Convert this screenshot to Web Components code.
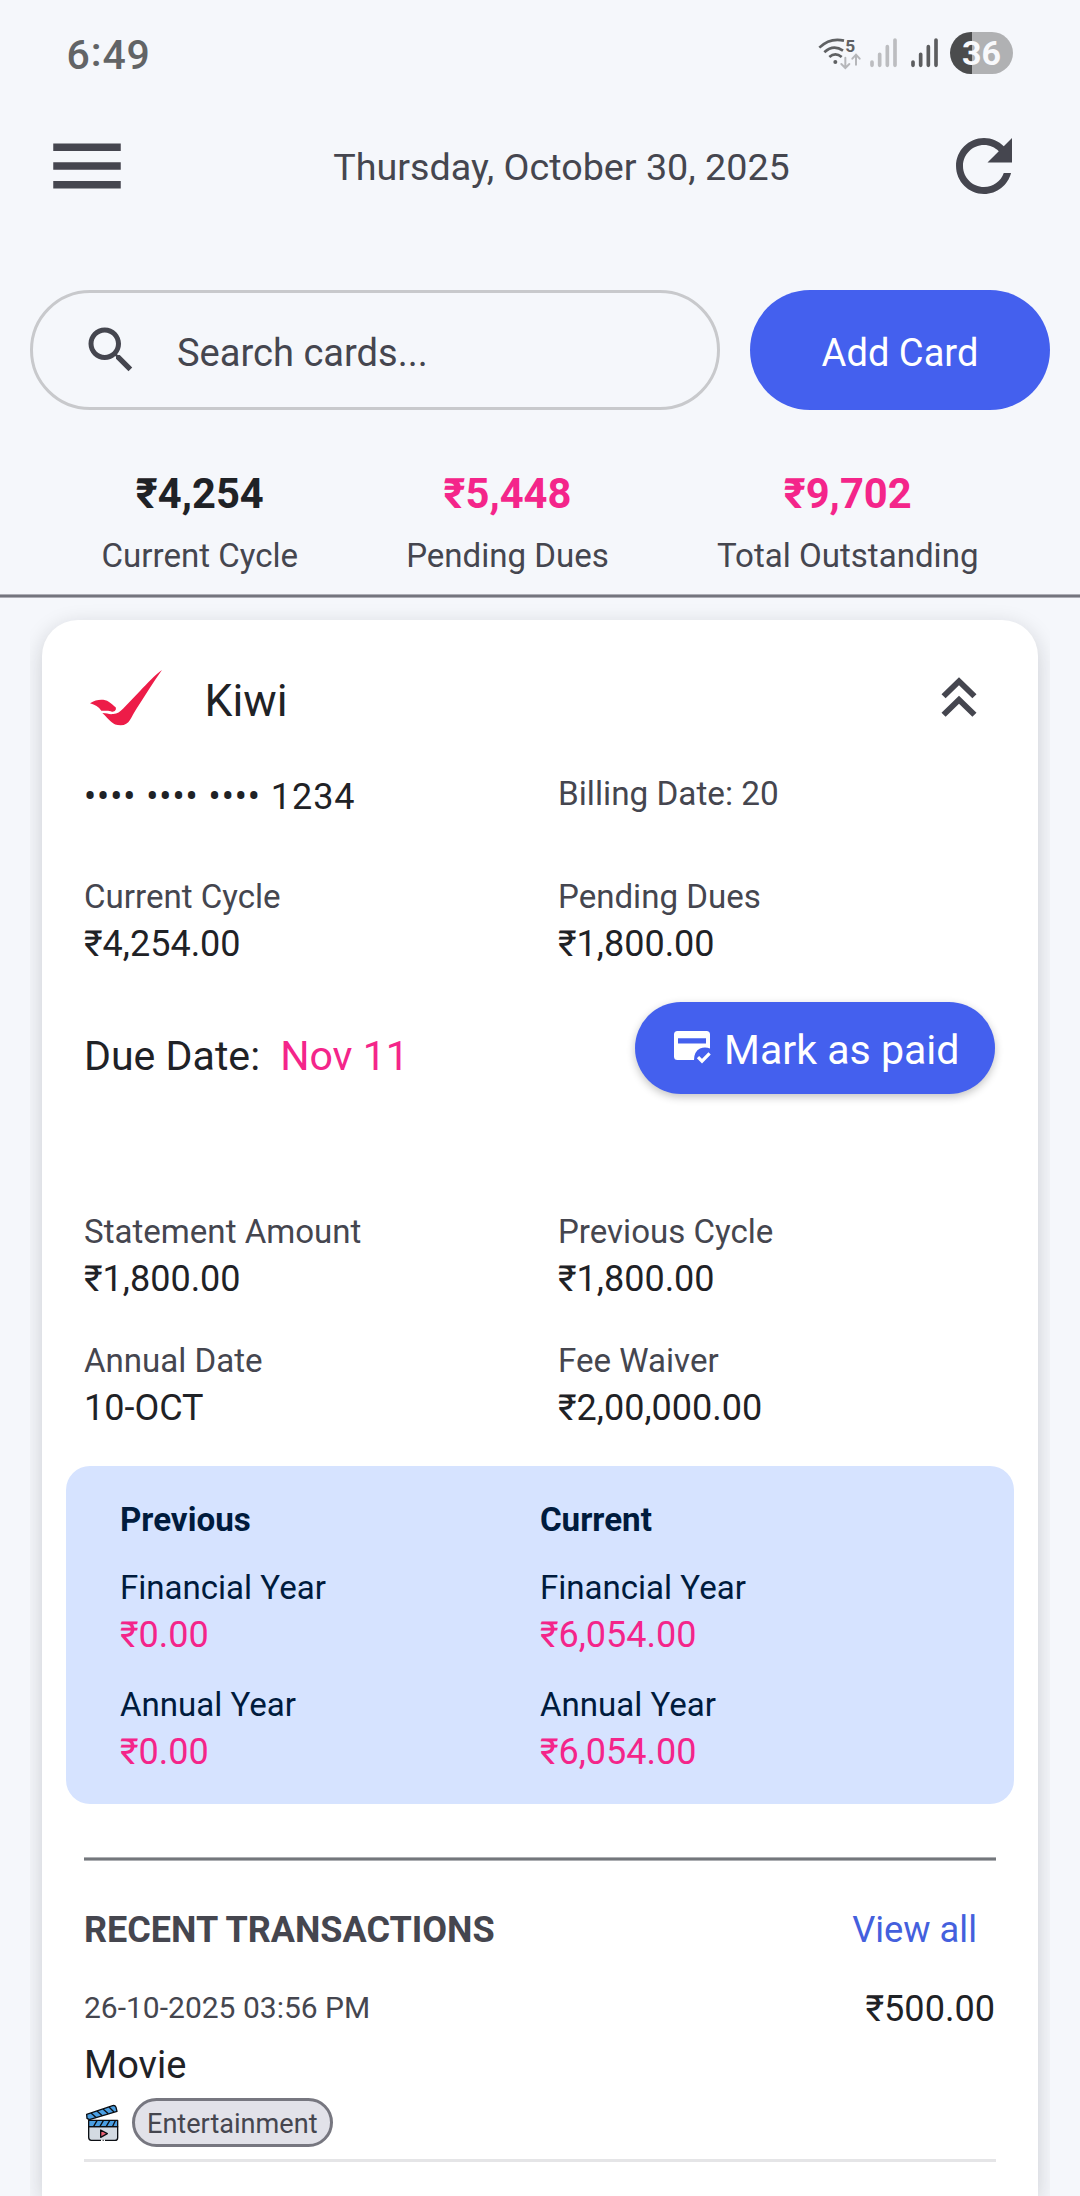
<!DOCTYPE html>
<html lang="en">
<head>
<meta charset="utf-8">
<title>Cards</title>
<style>
  html, body { margin: 0; height: 100%; }
  body { background: #f5f7fb; font-family: Roboto, "Noto Sans", sans-serif; color: #1f2226; overflow: hidden; height: 2196px; }
</style>
</head>
<body>
<cards-app></cards-app>

<script>
const define = (name, html) => {
  const tpl = document.createElement('template');
  tpl.innerHTML = html;
  customElements.define(name, class extends HTMLElement {
    constructor() {
      super();
      this.attachShadow({ mode: 'open' }).append(tpl.content.cloneNode(true));
    }
  });
};

/* Status bar: clock, wifi, two signal meters, battery */
define('status-bar', `
<style>
  :host { display: flex; align-items: center; justify-content: space-between; height: 106px; padding: 0 67px 0 66.5px; box-sizing: border-box; }
  .clock { font-size: 41px; font-weight: 500; line-height: 44px; letter-spacing: .9px; color: #626466; margin-top: 3px; }
  .clock span { vertical-align: 3px; line-height: 1px; }
  .right { display: flex; align-items: center; gap: 6px; }
  svg { display: block; }
  .battery { width: 63px; height: 42px; border-radius: 21px; display: flex; align-items: center; justify-content: center;
    background: linear-gradient(90deg, #4b4c4d 0 22px, #b0b1b3 22px); color: #f8f9fc; font-size: 34px; font-weight: 700; line-height: 42px; }
</style>
<div class="clock">6<span>:</span>49</div>
<div class="right">
  <svg width="134" height="42" viewBox="90 66 402 126" fill="none" stroke-linecap="round">
    <g stroke="#5f6163" stroke-width="8" stroke-linecap="butt">
      <path d="M118 113Q150 82 192 92"/>
      <path d="M133 127Q160 102 189 122"/>
      <path d="M148 141Q166 125 185 141"/>
    </g>
    <circle cx="166" cy="156" r="6" fill="#5f6163"/>
    <text x="196" y="125" font-family="Roboto" font-weight="700" font-size="52" fill="#5f6163">5</text>
    <g stroke="#b6b7ba" stroke-width="6">
      <path d="M196 143V172M184 162L196 174L208 162"/>
      <path d="M228 164V136M217 146L228 134L239 146"/>
    </g>
    <g stroke="#bcbdc0" stroke-width="11">
      <path d="M276 156V166M299 133V166M322 110V166M345 90V166"/>
    </g>
    <g stroke="#5c5d5f" stroke-width="11">
      <path d="M399 156V166M422 133V166M445 110V166M468 90V166"/>
    </g>
  </svg>
  <div class="battery">36</div>
</div>`);

/* Top bar: menu, date, refresh */
define('top-bar', `
<style>
  :host { display: flex; align-items: center; height: 120px; padding: 0 54px 0 42px; box-sizing: border-box; color: #45464f; }
  svg { display: block; fill: currentColor; flex: none; }
  .date { flex: 1; text-align: center; padding: 2px 0 0 49px; font-size: 37.7px; line-height: 44px; }
</style>
<svg width="90" height="90" viewBox="0 0 24 24"><path d="M3 18h18v-2H3v2zm0-5h18v-2H3v2zm0-7v2h18V6H3z"/></svg>
<div class="date"><slot></slot></div>
<svg width="84" height="84" viewBox="0 0 24 24"><path d="M17.65 6.35C16.2 4.9 14.21 4 12 4c-4.42 0-7.99 3.58-7.99 8s3.57 8 7.99 8c3.73 0 6.84-2.55 7.73-6h-2.08c-.82 2.33-3.04 4-5.65 4-3.31 0-6-2.69-6-6s2.69-6 6-6c1.66 0 3.14.69 4.22 1.78L13 11h7V4l-2.35 2.35z"/></svg>`);

define('search-field', `
<style>
  :host { display: flex; align-items: center; flex: 1; height: 120px; box-sizing: border-box; border: 3px solid #c8c9cc; border-radius: 60px; padding-left: 48px; gap: 36px; color: #45464f; font-size: 38.1px; }
  svg { display: block; fill: currentColor; }
  span { line-height: 44px; margin-top: 5px; }
</style>
<svg width="60" height="60" viewBox="0 0 24 24"><path d="M15.5 14h-.79l-.28-.27C15.41 12.59 16 11.11 16 9.5 16 5.91 13.09 3 9.5 3S3 5.91 3 9.5 5.91 16 9.5 16c1.61 0 3.09-.59 4.23-1.57l.27.28v.79l5 4.99L20.49 19l-4.99-5zm-6 0C7.01 14 5 11.99 5 9.5S7.01 5 9.5 5 14 7.01 14 9.5 11.99 14 9.5 14z"/></svg>
<span><slot></slot></span>`);

define('add-button', `
<style>
  :host { display: flex; align-items: center; justify-content: center; width: 300px; height: 120px; border-radius: 60px; background: #4460ee; color: #fff; font-size: 38.1px; }
  span { line-height: 44px; margin-top: 5px; }
</style>
<span><slot></slot></span>`);

define('total-item', `
<style>
  :host { display: flex; flex-direction: column; align-items: center; }
  .v { font-size: 41.7px; font-weight: 700; line-height: 48px; color: var(--value, #1f2226); }
  .l { font-size: 33.1px; line-height: 40px; margin-top: 18px; color: #45464f; }
</style>
<div class="v"><slot name="value"></slot></div>
<div class="l"><slot></slot></div>`);

/* Label above an amount */
define('info-pair', `
<style>
  :host { display: block; padding-top: var(--drop, 1px); margin-bottom: calc(-1 * var(--drop, 1px)); }
  .l { font-size: 33.1px; line-height: 40px; color: var(--label, #45464f); }
  .v { font-size: 36px; line-height: 44px; margin-top: 5px; color: var(--value, #1f2226); }
</style>
<div class="l"><slot></slot></div>
<div class="v"><slot name="value"></slot></div>`);

define('pay-button', `
<style>
  :host { display: flex; align-items: center; width: 360px; height: 92px; box-sizing: border-box; padding-left: 39px; gap: 13px; border-radius: 46px;
    background: #4460ee; color: #fff; font-size: 41.1px; box-shadow: 0 3px 8px rgba(0,0,0,.24); }
  span { line-height: 48px; margin-top: 5px; white-space: nowrap; }
  svg { display: block; flex: none; }
</style>
<svg width="37" height="33" viewBox="0 0 37 33">
  <path fill="#fff" fill-rule="evenodd" d="M3.5 0H32.5Q36 0 36 3.500V17.500Q31 15.500 26 17.500Q20 20.500 20 29H3.500Q0 29 0 25.500V3.500Q0 0 3.500 0ZM4 7.300V12.500H32V7.300Z"/>
  <path d="M24 26.200L28 30.200L35.600 22.400" fill="none" stroke="#fff" stroke-width="3.200"/>
</svg>
<span><slot></slot></span>`);

define('year-panel', `
<style>
  :host { display: grid; grid-template-columns: 420px 1fr; row-gap: 28.3px; margin: 0 -18px; height: 338px; box-sizing: border-box; padding: 33.3px 0 0 53.9px;
    border-radius: 24px; background: #d6e3ff; align-content: start; --drop: 0px; --label: #001b3d; --value: #f4258a; }
  b { font-size: 33.2px; line-height: 40px; color: #001b3d; padding-top: 1px; margin-bottom: -1px; }
</style>
<b>Previous</b><b>Current</b>
<info-pair>Financial Year<span slot="value">₹0.00</span></info-pair>
<info-pair>Financial Year<span slot="value">₹6,054.00</span></info-pair>
<info-pair>Annual Year<span slot="value">₹0.00</span></info-pair>
<info-pair>Annual Year<span slot="value">₹6,054.00</span></info-pair>`);

define('transaction-row', `
<style>
  :host { display: block; padding-bottom: 12.500px; border-bottom: 3px solid #e5e5e7; }
  .row { display: flex; justify-content: space-between; align-items: flex-start; padding-top: 1px; margin-bottom: -1px; }
  .date { font-size: 30px; line-height: 36px; margin-top: 2.500px; color: #45464f; }
  .amt { font-size: 36.1px; line-height: 44px; margin-right: 1px; }
  .name { font-size: 38px; line-height: 46px; margin-top: 11.5px; }
  .tags { display: flex; align-items: center; gap: 12px; margin-top: 10px; }
  .chip { height: 49px; box-sizing: border-box; border: 3px solid #777780; border-radius: 25px; background: #e2e2e9; color: #45464f; font-size: 27.1px; line-height: 46px; padding: 0 12px; }
  svg { display: block; }
</style>
<div class="row"><div class="date"><slot name="date"></slot></div><div class="amt"><slot name="amount"></slot></div></div>
<div class="name"><slot></slot></div>
<div class="tags">
  <svg width="36" height="39" viewBox="162 669 108 117" stroke="#0c0f14" stroke-width="4" stroke-linejoin="round">
    <path d="M170 703L248 677Q255 675 258 682L261 694L178 719L171 715Z" fill="#4b9fe3"/>
    <path d="M183 699L199 713M201 693L217 707M219 687L235 701M237 681L252 696" fill="none"/>
    <path d="M176 740V772Q176 781 184 781H255Q263 781 263 773V740Z" fill="#d3dae2"/>
    <path d="M176 721H263V740H176Z" fill="#4b9fe3"/>
    <path d="M191 739L201 722M210 739L220 722M229 739L239 722M248 739L256 722" fill="none"/>
    <path d="M212 750V772L232 761Z" fill="#ea6173"/>
    <path d="M213 781H218M221 781H225" stroke="#fff" stroke-width="5"/>
  </svg>
  <div class="chip"><slot name="tag"></slot></div>
</div>`);

define('credit-card', `
<style>
  :host { display: block; flex: 1; box-sizing: border-box; margin: 22px 12px 0; padding: 40px 42px 0; background: #fff; border-radius: 36px 36px 0 0; box-shadow: 0 6px 22px rgba(20,22,30,.18); }
  .head { display: flex; align-items: center; height: 76px; }
  .head svg { display: block; flex: none; }
  .name { flex: 1; margin: 7px 0 0 36.500px; font-size: 44.500px; line-height: 52px; }
  .chev { margin: -2px 2px 0 0; }
  .grid { display: grid; grid-template-columns: 474px 1fr; }
  .num { font-size: 36px; line-height: 44px; letter-spacing: .95px; margin-top: .7px; }
  .bill { font-size: 33.300px; line-height: 40px; color: #45464f; }
  .due { display: flex; justify-content: space-between; align-items: center; margin-right: 1px; }
  .due > div { display: flex; gap: 20px; margin-top: 16px; font-size: 41.100px; line-height: 48px; }
  .due em { font-style: normal; color: #f4258a; }
  hr { border: 0; margin: 53px 0 0; height: 4px; background: linear-gradient(#adafb3 0 1px, #74777c 1px 3px, #adafb3 3px); }
  .recent { display: flex; justify-content: space-between; margin: 47px 19px 34.500px 0; font-size: 36px; line-height: 44px; }
  .recent b { color: #45464f; }
  .recent a { color: #4460dd; font-size: 36.300px; }
</style>
<div class="head">
  <svg width="84" height="76" viewBox="162 150 252 228" fill="#ed1c48">
    <path d="M180 280C200 267 222 267 236 275C245 281 252 288 257 292C260 300 254 306 246 305C236 300 224 303 214 302C206 291 195 284 180 280Z"/>
    <path d="M217 309C232 309 236 314 250 312C262 311 270 305 279 296L330 243C352 220 375 195 396 180C370 215 345 258 319 297C303 320 300 346 272 346C246 346 240 330 217 309Z"/>
  </svg>
  <div class="name">Kiwi</div>
  <svg class="chev" width="70" height="68" viewBox="0 0 24 24" preserveAspectRatio="none" fill="#45464f"><path d="M6 17.590L7.410 19 12 14.420 16.590 19 18 17.590l-6-6z"/><path d="M6 11l1.410 1.410L12 7.830l4.590 4.580L18 11l-6-6z"/></svg>
</div>
<div class="grid" style="margin-top:38px"><div class="num">•••• •••• •••• 1234</div><div class="bill">Billing Date: 20</div></div>
<div class="grid" style="margin-top:57.700px">
  <info-pair>Current Cycle<span slot="value">₹4,254.00</span></info-pair>
  <info-pair>Pending Dues<span slot="value">₹1,800.00</span></info-pair>
</div>
<div class="due" style="margin-top:36.600px">
  <div><span>Due Date:</span><em>Nov 11</em></div>
  <pay-button>Mark as paid</pay-button>
</div>
<div class="grid" style="margin-top:117.400px;row-gap:40px">
  <info-pair>Statement Amount<span slot="value">₹1,800.00</span></info-pair>
  <info-pair>Previous Cycle<span slot="value">₹1,800.00</span></info-pair>
  <info-pair>Annual Date<span slot="value">10-OCT</span></info-pair>
  <info-pair>Fee Waiver<span slot="value">₹2,00,000.00</span></info-pair>
</div>
<year-panel style="margin-top:36.600px"></year-panel>
<hr>
<div class="recent"><b>RECENT TRANSACTIONS</b><a>View all</a></div>
<transaction-row><span slot="date">26-10-2025 03:56 PM</span><span slot="amount">₹500.00</span>Movie<span slot="tag">Entertainment</span></transaction-row>`);

define('cards-app', `
<style>
  :host { display: flex; flex-direction: column; width: 1080px; height: 2196px; }
  .search { display: flex; gap: 30px; padding: 0 30px; margin-top: 64px; }
  .totals { display: flex; justify-content: space-between; padding: 0 101.500px; margin-top: 60.200px; height: 123.800px; }
  .rule { height: 4px; flex: none; background: linear-gradient(#adadb5 0 1px, #74757e 1px 3px, #adadb5 3px); }
  .list { flex: 1; display: flex; flex-direction: column; margin: 0 30px; overflow: hidden; }
  total-item.due { --value: #f4258a; }
</style>
<status-bar></status-bar>
<top-bar>Thursday, October 30, 2025</top-bar>
<div class="search"><search-field>Search cards...</search-field><add-button>Add Card</add-button></div>
<div class="totals">
  <total-item><span slot="value">₹4,254</span>Current Cycle</total-item>
  <total-item class="due"><span slot="value">₹5,448</span>Pending Dues</total-item>
  <total-item class="due"><span slot="value">₹9,702</span>Total Outstanding</total-item>
</div>
<div class="rule"></div>
<div class="list"><credit-card></credit-card></div>`);
</script>
</body>
</html>
